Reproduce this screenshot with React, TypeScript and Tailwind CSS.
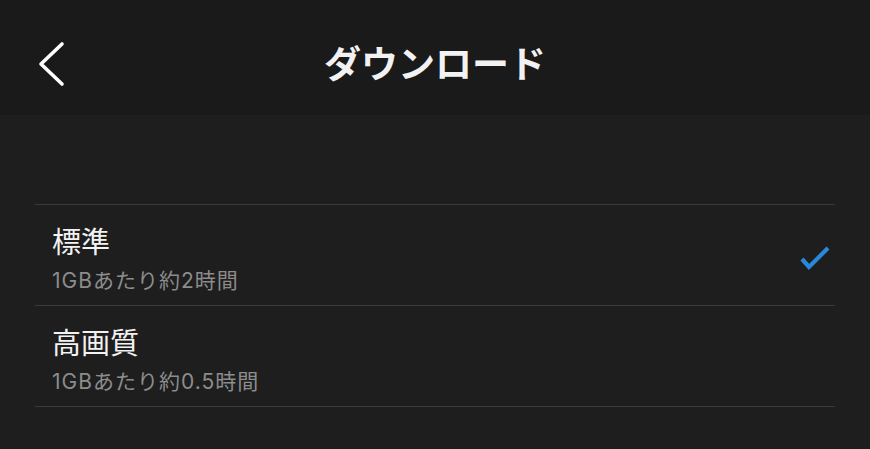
import { useState } from "react";

const options = [
  { id: "standard", title: "標準", detail: "1GBあたり約2時間" },
  { id: "high", title: "高画質", detail: "1GBあたり約0.5時間" },
];

export default function App() {
  const [selected, setSelected] = useState("standard");
  return (
    <div
      className="min-h-screen w-full bg-[#1e1e1e] text-[#f2f2f2]"
      style={{ fontFamily: 'Inter, "Noto Sans CJK JP", sans-serif' }}
    >
      <header className="relative flex h-[115px] items-center justify-center bg-[#1a1a1a] pt-[15px]">
        <button className="absolute left-[34px] top-[37px] flex h-[54px] w-[36px] items-center justify-center">
          <svg width="36" height="54" viewBox="0 0 36 54" fill="none">
            <path
              d="M28 7 L7 27 L28 47"
              stroke="#ffffff"
              strokeWidth="3.6"
              strokeLinecap="round"
              strokeLinejoin="round"
            />
          </svg>
        </button>
        <h1 className="text-[37px] font-bold leading-[44px]">ダウンロード</h1>
      </header>
      <div className="mx-[35px] mt-[89px] border-t border-[#3a3a3a]">
        {options.map((o) => (
          <div
            key={o.id}
            onClick={() => setSelected(o.id)}
            className="flex items-center justify-between border-b border-[#3a3a3a] pb-[11px] pl-[17px] pr-[4px] pt-[21px]"
          >
            <div className="flex flex-col">
              <span className="text-[29px] leading-[34px] text-[#f2f2f2]">
                {o.title}
              </span>
              <span className="mt-[8px] text-[21px] leading-[26px] tracking-[1px] text-[#8c8c8c]">
                {o.detail}
              </span>
            </div>
            {selected === o.id && (
              <svg width="32" height="28" viewBox="0 0 32 28" fill="none">
                <path
                  d="M3 13 L10 21 L29 2"
                  stroke="#2a88dc"
                  strokeWidth="4.2"
                />
              </svg>
            )}
          </div>
        ))}
      </div>
    </div>
  );
}
